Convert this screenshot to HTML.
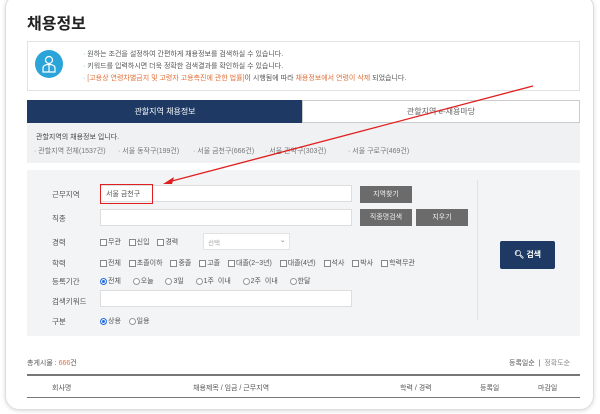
<!DOCTYPE html>
<html><head><meta charset="utf-8"><style>
*{margin:0;padding:0;box-sizing:border-box}
body{width:600px;height:414px;background:#fff;font-family:"Liberation Sans","Noto Sans CJK KR",sans-serif;position:relative;overflow:hidden;color:#333}
.a{position:absolute;white-space:nowrap}
.frame{position:absolute;left:5px;top:-6px;width:589px;height:416px;border:1px solid #ddd;border-radius:14px;box-shadow:0 1px 4px rgba(0,0,0,.15)}
.s{font-size:7.5px;color:#555}
.inp{position:absolute;background:#fff;border:1px solid #ddd}
.btn{position:absolute;background:#6b6b6b;color:#eee;font-size:7px;text-align:center;line-height:17px}
.cb{display:inline-block;width:7px;height:7px;border:1px solid #888;vertical-align:middle;margin-right:1px;background:#fff}
.rd{display:inline-block;width:7px;height:7px;border:1px solid #999;border-radius:50%;vertical-align:middle;margin-right:1px;background:#fff}
.rd.on{background:#2a6be0;border-color:#2a6be0;box-shadow:inset 0 0 0 1px #fff}
</style></head><body>
<div class="frame"></div>
<div class="a" style="left:27px;top:10px;font-size:16px;font-weight:bold;color:#222">채용정보</div>
<div class="a" style="left:27px;top:41px;width:553px;height:50px;border:1px solid #e2e2e2"></div>
<div class="a" style="left:35px;top:50px;width:28px;height:28px;border-radius:50%;background:#2ba4d9"></div>
<svg class="a" style="left:41px;top:55px" width="16" height="18" viewBox="0 0 16 18" fill="none" stroke="#fff" stroke-width="1.2"><circle cx="8" cy="5" r="3.5"/><path d="M2 17v-4c0-2 2-3.5 6-3.5s6 1.5 6 3.5v4z"/><path d="M8 10v7"/></svg>
<div class="a s" style="left:83px;top:49px;font-size:7px"><span style="color:#2ba4d9">·</span> 원하는 조건을 설정하여 간편하게 채용정보를 검색하실 수 있습니다.</div>
<div class="a s" style="left:83px;top:61px;font-size:7px"><span style="color:#2ba4d9">·</span> 키워드를 입력하시면 더욱 정확한 검색결과를 확인하실 수 있습니다.</div>
<div class="a s" style="left:83px;top:73px;font-size:7px"><span style="color:#2ba4d9">·</span> <span style="color:#e0703a">[고용상 연령차별금지 및 고령자 고용촉진에 관한 법률]</span>이 시행됨에 따라 <span style="color:#e0703a">채용정보에서 연령이 삭제</span> 되었습니다.</div>
<div class="a" style="left:27px;top:100px;width:276px;height:23px;background:#1e3a64;color:#fff;font-size:8px;text-align:center;line-height:23px">관할지역 채용정보</div>
<div class="a" style="left:302px;top:100px;width:278px;height:23px;border:1px solid #ccc;background:#fff;color:#666;font-size:8px;text-align:center;line-height:21px">관할지역 e-채용마당</div>
<div class="a" style="left:27px;top:123px;width:553px;height:40px;background:#f0f1f3"></div>
<div class="a s" style="left:36px;top:132px;font-size:7px;color:#444">관할지역의 채용정보 입니다.</div>
<div class="a s" style="left:34px;top:146px;font-size:7px;color:#777">· 관할지역 전체(1537건)</div>
<div class="a s" style="left:118px;top:146px;font-size:7px;color:#777">· 서울 동작구(199건)</div>
<div class="a s" style="left:193px;top:146px;font-size:7px;color:#777">· 서울 금천구(666건)</div>
<div class="a s" style="left:265px;top:146px;font-size:7px;color:#777">· 서울 관악구(303건)</div>
<div class="a s" style="left:348px;top:146px;font-size:7px;color:#777">· 서울 구로구(469건)</div>
<div class="a" style="left:27px;top:170px;width:553px;height:166px;background:#f3f4f6"></div>
<div class="a" style="left:477px;top:180px;width:1px;height:140px;background:#e2e2e2"></div>
<div class="a s" style="left:52px;top:189px">근무지역</div>
<div class="a s" style="left:52px;top:213px">직종</div>
<div class="a s" style="left:52px;top:237px">경력</div>
<div class="a s" style="left:52px;top:258px">학력</div>
<div class="a s" style="left:52px;top:276px">등록기간</div>
<div class="a s" style="left:52px;top:296px">검색키워드</div>
<div class="a s" style="left:52px;top:316px">구분</div>
<div class="inp" style="left:100px;top:185px;width:252px;height:17px"></div>
<div class="a" style="left:100px;top:184px;width:53px;height:20px;border:1.5px solid #e02020"></div>
<div class="a s" style="left:106px;top:189px;font-size:7px">서울 금천구</div>
<div class="btn" style="left:360px;top:186px;width:52px;height:17px">지역찾기</div>
<div class="inp" style="left:100px;top:209px;width:252px;height:17px"></div>
<div class="btn" style="left:360px;top:209px;width:52px;height:17px">직종명검색</div>
<div class="btn" style="left:416px;top:209px;width:52px;height:17px">지우기</div>
<div class="a s" style="left:100px;top:237px;font-size:7px"><span class="cb"></span>무관 &nbsp;&nbsp;&nbsp;<span class="cb"></span>신입 &nbsp;&nbsp;&nbsp;<span class="cb"></span>경력</div>
<div class="inp" style="left:203px;top:233px;width:87px;height:17px;border-color:#e3e3e3"></div>
<div class="a s" style="left:208px;top:237px;font-size:6.5px;color:#aaa">선택</div>
<div class="a s" style="left:280px;top:236px;font-size:6.5px;color:#777">⌄</div>
<div class="a s" style="left:100px;top:258px;font-size:7px;word-spacing:2px"><span class="cb"></span>전체 &nbsp;<span class="cb"></span>초졸이하 &nbsp;<span class="cb"></span>중졸 &nbsp;<span class="cb"></span>고졸 &nbsp;<span class="cb"></span>대졸(2~3년) &nbsp;<span class="cb"></span>대졸(4년) &nbsp;<span class="cb"></span>석사 &nbsp;<span class="cb"></span>박사 &nbsp;<span class="cb"></span>학력무관</div>
<div class="a s" style="left:100px;top:276px;font-size:7px;word-spacing:2px"><span class="rd on"></span>전체 &nbsp;&nbsp;<span class="rd"></span>오늘 &nbsp;&nbsp;<span class="rd"></span>3일 &nbsp;&nbsp;<span class="rd"></span>1주 이내 &nbsp;&nbsp;<span class="rd"></span>2주 이내 &nbsp;&nbsp;<span class="rd"></span>한달</div>
<div class="inp" style="left:100px;top:290px;width:252px;height:17px"></div>
<div class="a s" style="left:100px;top:316px;font-size:7px"><span class="rd on"></span>상용 &nbsp;&nbsp;&nbsp;<span class="rd"></span>일용</div>
<div class="a" style="left:500px;top:241px;width:55px;height:28px;background:#1e3a64;border-radius:2px;color:#fff;font-size:8px;font-weight:bold;text-align:center;line-height:28px">&#x1F50D;&#xFE0E; 검색</div>
<div class="a s" style="left:27px;top:358px;font-size:7px">총게시물 : <span style="color:#e0703a">666</span>건</div>
<div class="a s" style="left:509px;top:358px;font-size:7px">등록일순 &nbsp;|&nbsp; <span style="color:#888">정확도순</span></div>
<div class="a" style="left:27px;top:374px;width:553px;height:2px;background:#777"></div>
<div class="a s" style="left:52px;top:383px;font-size:7px">회사명</div>
<div class="a s" style="left:193px;top:383px;font-size:7px">채용제목 / 임금 / 근무지역</div>
<div class="a s" style="left:400px;top:383px;font-size:7px">학력 / 경력</div>
<div class="a s" style="left:480px;top:383px;font-size:7px">등록일</div>
<div class="a s" style="left:538px;top:383px;font-size:7px">마감일</div>
<div class="a" style="left:27px;top:397px;width:553px;height:1px;background:#777"></div>
<svg class="a" style="left:0;top:0" width="600" height="414"><line x1="533" y1="86" x2="172" y2="181" stroke="#e02020" stroke-width="1.3"/><path d="M163 184 L174 177 L172 184 Z" fill="#e02020"/></svg>
</body></html>
